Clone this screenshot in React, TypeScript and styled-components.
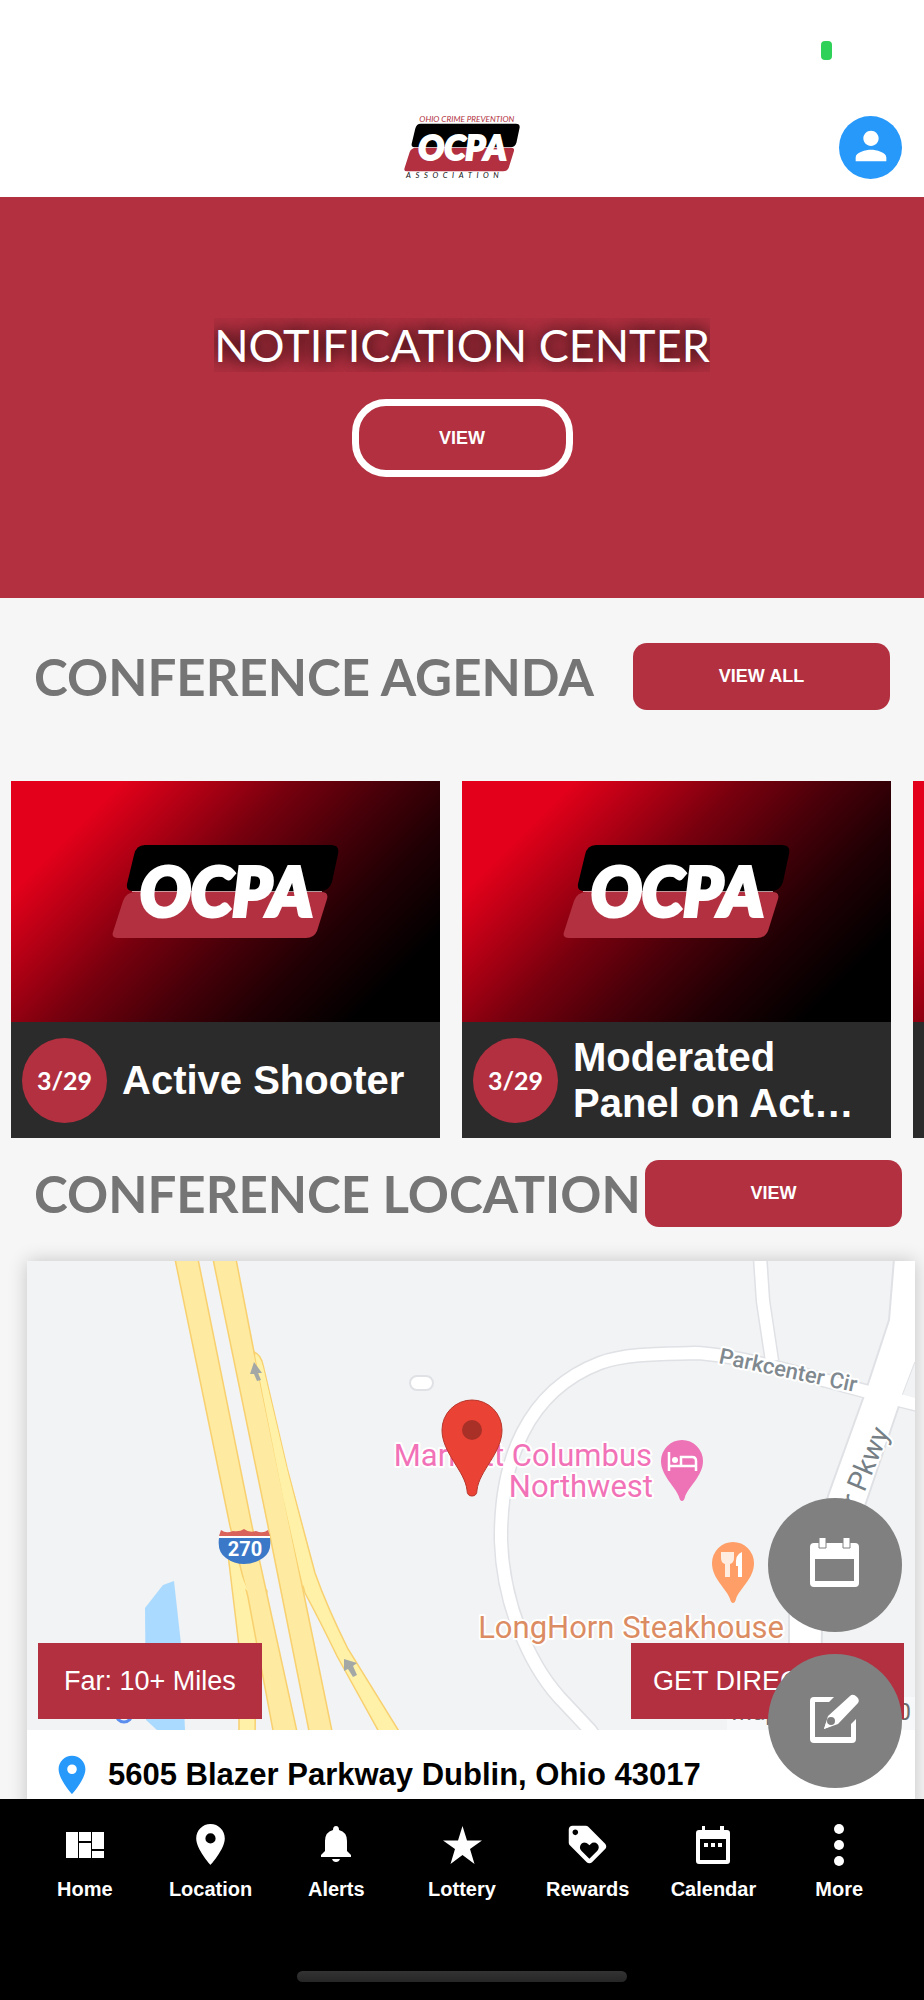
import React from "react";
import styled, { createGlobalStyle } from "styled-components";
import { MdLoyalty, MdPerson, MdPlace } from "react-icons/md";

const RED = "#b23040";
const BLUE = "#2699fb";
const SANS = `"Liberation Sans", Arial, sans-serif`;
const DISPLAY = `Lato, "Liberation Sans", sans-serif`;

const GlobalStyle = createGlobalStyle`
  *, *::before, *::after { box-sizing: border-box; }
  body { margin: 0; background: #f6f6f6; font-family: ${SANS}; }
  button { font-family: inherit; border: 0; padding: 0; cursor: pointer; }
  h1, h2, h3, p, ul { margin: 0; padding: 0; }
  svg { display: block; }
`;

const Shell = styled.div`
  height: 100vh;
  display: flex;
  flex-direction: column;
  background: #f6f6f6;
`;

const StatusBar = styled.div`
  flex: none;
  height: 98px;
  padding: 41px 92px 0 0;
  display: flex;
  justify-content: flex-end;
  background: #fff;
`;

const Battery = styled.span`
  width: 11px;
  height: 19px;
  border-radius: 4px;
  background: #30d158;
`;

const TopBar = styled.header`
  flex: none;
  height: 99px;
  padding: 0 22px;
  display: grid;
  grid-template-columns: 1fr auto 1fr;
  align-items: center;
  background: #fff;
`;

const Avatar = styled.button`
  grid-column: 3;
  justify-self: end;
  width: 63px;
  height: 63px;
  border-radius: 50%;
  display: grid;
  place-items: center;
  padding-bottom: 4px;
  background: ${BLUE};
  color: #fff;
`;

const BrandLink = styled.a`
  grid-column: 2;
`;

const Stage = styled.div`
  position: relative;
  flex: 1;
  min-height: 0;
  display: flex;
`;

const Content = styled.main`
  flex: 1;
  min-width: 0;
  overflow: hidden auto;
  scrollbar-width: none;
`;

const Hero = styled.section`
  height: 401px;
  display: flex;
  flex-direction: column;
  align-items: center;
  justify-content: center;
  gap: 27px;
  background: ${RED};
`;

const HeroTitle = styled.h1`
  overflow: hidden;
  font: 400 45px/54px ${DISPLAY};
  color: #fff;
  text-shadow: 0 0 20px rgba(0, 0, 0, 0.8), 0 0 14px rgba(0, 0, 0, 0.5);
`;

const OutlineButton = styled.button`
  width: 221px;
  height: 78px;
  border: 7px solid #fff;
  border-radius: 34px;
  background: transparent;
  color: #fff;
  font-size: 18px;
  font-weight: 700;
`;

const SectionBar = styled.div<{ $tight?: boolean }>`
  display: flex;
  align-items: center;
  justify-content: space-between;
  padding: ${(p) => (p.$tight ? "22px 22px 34px 34px" : "45px 34px 71px")};
`;

const SectionTitle = styled.h2`
  font: 700 51px/62px ${DISPLAY};
  color: #757575;
  white-space: nowrap;
`;

const SolidButton = styled.button`
  flex: none;
  width: 257px;
  height: 67px;
  border-radius: 14px;
  background: ${RED};
  color: #fff;
  font-size: 18px;
  font-weight: 700;
`;

const CardRail = styled.ul`
  display: flex;
  gap: 22px;
  padding: 0 11px;
  list-style: none;
  overflow-x: auto;
  scrollbar-width: none;
`;

const Card = styled.li`
  flex: none;
  width: 429px;
  background: #2b2b2b;
`;

const CardArt = styled.div`
  height: 241px;
  padding-bottom: 20px;
  display: grid;
  place-items: center;
  background: linear-gradient(135deg, #e2001a 17%, #b00014 29%, #78000e 42%, #4a0009 56%, #220004 70%, #000 87%);
`;

const CardFooter = styled.div`
  height: 116px;
  display: flex;
  align-items: center;
  gap: 15px;
  padding: 0 20px 0 11px;
`;

const DateBadge = styled.span`
  flex: none;
  width: 85px;
  height: 85px;
  border-radius: 50%;
  display: grid;
  place-items: center;
  background: ${RED};
  color: #fff;
  font: 700 25px/32px ${DISPLAY};
`;

const CardTitle = styled.h3`
  color: #fff;
  font-size: 40px;
  line-height: 46px;
`;

const PlaceCard = styled.article`
  margin: 0 9px 22px 27px;
  background: #fff;
  box-shadow: 0 0 18px rgba(0, 0, 0, 0.2);
`;

const MapFrame = styled.div`
  position: relative;
  height: 469px;
  overflow: hidden;
`;

const MapOverlay = styled.div`
  position: absolute;
  inset: auto 11px 11px;
  display: flex;
  justify-content: space-between;
`;

const Distance = styled.span`
  height: 76px;
  padding: 0 26px;
  display: flex;
  align-items: center;
  background: ${RED};
  color: #fff;
  font-size: 27px;
`;

const Directions = styled.button`
  height: 76px;
  padding: 0 22px;
  background: ${RED};
  color: #fff;
  font-size: 27px;
`;

const Address = styled.p`
  height: 90px;
  padding: 0 22px;
  display: flex;
  align-items: center;
  gap: 13px;
  color: #000;
  font-size: 31px;
  font-weight: 700;
  white-space: nowrap;
`;

const FabStack = styled.div`
  position: absolute;
  right: 22px;
  bottom: 11px;
  display: flex;
  flex-direction: column;
  gap: 22px;
`;

const Fab = styled.button`
  width: 134px;
  height: 134px;
  border-radius: 50%;
  display: grid;
  place-items: center;
  padding: 0 2px 5px 0;
  background: #808080;
`;

const TabBar = styled.nav`
  flex: none;
  background: #000;
`;

const Tabs = styled.ul`
  display: flex;
  padding: 20px 22px 0;
  list-style: none;
`;

const Tab = styled.li`
  flex: 1;
`;

const TabLink = styled.a`
  display: flex;
  flex-direction: column;
  align-items: center;
  gap: 7px;
  color: #fff;
  font-size: 20px;
  line-height: 24px;
  font-weight: 700;
  text-decoration: none;
`;

const TabIcon = styled.span`
  height: 51px;
  display: grid;
  place-items: center;
`;

const HomeIndicator = styled.div`
  width: 330px;
  max-width: 60%;
  height: 11px;
  margin: 70px auto 18px;
  border-radius: 6px;
  background: linear-gradient(#333, #262626);
`;

function LogoMark() {
  return (
    <>
      <path d="M33 0H219Q228 0 226 9L220 37Q217 46 208 46H20Q14 46 15 39L22 10Q24 0 33 0Z" fill="#000" />
      <path d="M24 47H209Q217 47 215 54L205 86Q202 93 194 93H6Q-1 93 1 87L11 56Q14 47 24 47Z" fill={RED} />
      <path d="M20 46.5H210" stroke="#fff" strokeOpacity="0.6" />
      <text
        x="28"
        y="71"
        fill="#fff"
        stroke="#fff"
        strokeWidth="4"
        fontFamily="Lato"
        fontWeight="900"
        fontStyle="italic"
        fontSize="67"
      >
        OCPA
      </text>
    </>
  );
}

function CardLogo() {
  return (
    <svg width="227" height="94" viewBox="0 0 227 94" role="img" aria-label="OCPA">
      <LogoMark />
    </svg>
  );
}

const TrackedWord = styled.text`
  font: italic 400 15px Lato, sans-serif;
  letter-spacing: 9px;
`;

function BrandLogo() {
  return (
    <svg width="116" height="67" viewBox="0 -19 227 131" role="img" aria-label="Ohio Crime Prevention Association">
      <LogoMark />
      <text x="30" y="-3" fill={RED} fontFamily="Lato" fontStyle="italic" fontSize="16">
        OHIO CRIME PREVENTION
      </text>
      <TrackedWord x="4" y="107" fill="#111">
        ASSOCIATION
      </TrackedWord>
    </svg>
  );
}

const Label = styled.text`
  font-family: Roboto, sans-serif;
  stroke: #fff;
  stroke-width: 4px;
  stroke-linejoin: round;
  paint-order: stroke;
`;

const ring =
  "M574 485L563 469L532 436C500 400 476 340 474 280C473 200 500 130 573 102C600 92 640 93 668 92C720 94 800 122 900 146";

function MapArt() {
  return (
    <svg width="100%" height="469" viewBox="0 0 888 469" preserveAspectRatio="xMidYMid slice" role="img" aria-label="Map of the conference location">
      <rect x="-400" width="1700" height="469" fill="#f1f3f4" />
      <path d="M118 347L136 324L147 320L154 383L158 469H130L119 459Z" fill="#aadaff" />
      <circle cx="97" cy="453" r="8" fill="none" stroke="#5b8def" strokeWidth="3" />

      <g stroke="#f8d06f" strokeWidth="1.5">
        <path d="M200 285L212 385V480H228L229 385L240 330Z" fill="#fff1a8" />
        <path d="M148 -2H171L225 265L272 480H248L221 336L203 265Z" fill="#feeaa0" />
        <path d="M227 91Q234 94 236 104L260 207L288 312Q300 346 321 388L378 480H357L310 395Q292 358 278 332L240 200Z" fill="#fff1a8" />
        <path d="M186 -2H209L227 91L276 329L307 480H284L241 265Z" fill="#feeaa0" />
      </g>
      <path d="M228 94Q234 98 236 106L260 208L287 315L276 325L256 236Z" fill="#fff1a8" />
      <path d="M204 290L221 330L206 318Z" fill="#fff1a8" />
      <g fill="#a3a8a6">
        <path d="M227 101L235 112H231L234 119L230 120L227 113L223 113Z" />
        <path d="M317 398L330 402L326 405L330 414L326 416L321 408L317 410Z" />
      </g>

      <rect x="383" y="115" width="23" height="14" rx="7" fill="#fff" stroke="#dfe1e5" strokeWidth="2" />

      <g fill="none" strokeLinejoin="round">
        <path d={ring} stroke="#dfe1e5" strokeWidth="15" />
        <path d="M733 -5L736 40L745 100" stroke="#dfe1e5" strokeWidth="15" />
      </g>
      <path d="M867 -2L862 59L838 132L802 232L762 354V469H793L795 368L841 236L875 136L888 102H1300V-2Z" fill="#fff" stroke="#dfe1e5" strokeWidth="2" />
      <path d="M888 102L875 136L1300 230V102Z" fill="#f1f3f4" />
      <g fill="none" stroke="#fff" strokeWidth="12" strokeLinejoin="round">
        <path d={ring} />
        <path d="M733 -5L736 40L745 100" />
      </g>

      <path d="M194 269Q199 273 206 270Q213 271 217 268Q222 272 229 270Q236 273 241 269L243 275H192Z" fill="#d9625b" />
      <path d="M192 277H243Q245 291 236 297Q227 303 217 303Q207 303 199 297Q190 291 192 277Z" fill="#3c78c8" />
      <path d="M192 276H243" stroke="#fff" strokeWidth="2" />
      <text x="218" y="295" textAnchor="middle" fill="#fff" fontFamily="Roboto" fontWeight="700" fontSize="20">
        270
      </text>

      <Label x="691" y="102" fontSize="22" fontWeight="500" fill="#80898f" transform="rotate(12 691 102)">
        Parkcenter Cir
      </Label>
      <Label x="863" y="171" fontSize="28" textAnchor="end" fill="#767f85" transform="rotate(-67 863 171)">
        Blazer Pkwy
      </Label>
      <Label x="625" y="205" fontSize="31" textAnchor="end" fill="#f272b8">
        Marriott Columbus
      </Label>
      <Label x="626" y="236" fontSize="31" textAnchor="end" fill="#f272b8">
        Northwest
      </Label>
      <Label x="757" y="377" fontSize="31" textAnchor="end" fill="#dc8c62">
        LongHorn Steakhouse
      </Label>

      <path d="M655 240Q653 240 652 236C649 226 634 215 634 200A21 21 0 0 1 676 200C676 215 661 226 658 236Q657 240 655 240Z" fill="#ee72b6" />
      <path d="M642 191V210M642 205H669M669 210V200Q669 196 665 196H654V204" fill="none" stroke="#fff" strokeWidth="2.5" />
      <circle cx="648" cy="199" r="3" fill="#fff" />
      <path d="M706 342Q704 342 703 338C700 328 685 318 685 302A21 21 0 0 1 727 302C727 318 712 328 709 338Q708 342 706 342Z" fill="#ff9e67" />
      <path d="M694 291H707V297Q707 302 703 303V316H698V303Q694 302 694 297Z" fill="#fff" fillOpacity="0.8" />
      <path d="M715 291V316H711V305H709Q708 293 715 291Z" fill="#fff" />

      <rect x="700" y="436" width="188" height="33" fill="#f8f9fa" fillOpacity="0.8" />
      <text x="884" y="459" textAnchor="end" fill="#6b6b6b" fontFamily="Roboto" fontSize="24">
        Map data ©2020
      </text>

      <path d="M445 235Q440 235 440 229C438 210 415 192 415 169A30 30 0 0 1 475 169C475 192 452 210 450 229Q450 235 445 235Z" fill="#ea4335" stroke="#b8352a" strokeWidth="1" />
      <circle cx="445" cy="169" r="10" fill="#a93027" />
    </svg>
  );
}

function CalendarFabIcon() {
  return (
    <svg width="49" height="49" viewBox="0 0 49 49" fill="#fff" aria-hidden="true">
      <path fillRule="evenodd" d="M4 5H45Q49 5 49 9V45Q49 49 45 49H4Q0 49 0 45V9Q0 5 4 5ZM5 21V43H44V21Z" />
      <path d="M9 -1H16V10H9ZM33 -1H40V10H33Z" stroke="#808080" />
    </svg>
  );
}

function ComposeIcon() {
  return (
    <svg width="49" height="49" viewBox="0 0 49 49" fill="#fff" aria-hidden="true">
      <path d="M24 3L19 8H5V43H41V30L46 25V45Q46 49 42 49H4Q0 49 0 45V7Q0 3 4 3Z" />
      <path d="M14 35L18 22L40 2Q43 -1 47 3Q50 6 48 9L28 30Z" />
      <circle cx="21" cy="27" r="4" fill="#808080" />
      <path d="M14 35L16 29L21 32Z" />
    </svg>
  );
}

function DashboardIcon() {
  return (
    <svg width="38" height="26" viewBox="0 0 38 26" fill="currentColor" aria-hidden="true">
      <path d="M0 0H12V26H0ZM13 0H25V9H13ZM13 11H25V26H13ZM26 0H38V17H26ZM26 19H38V26H26Z" />
    </svg>
  );
}

function BellIcon() {
  return (
    <svg width="30" height="37" viewBox="0 0 30 37" fill="currentColor" aria-hidden="true">
      <path d="M15 0Q18 0 18 4Q26 6 26 15V25L30 29V31H0V29L4 25V15Q4 6 12 4Q12 0 15 0ZM11 33H19Q18 36 15 36Q12 36 11 33Z" />
    </svg>
  );
}

function StarIcon() {
  return (
    <svg width="39" height="38" viewBox="0 0 39 38" fill="currentColor" aria-hidden="true">
      <path d="M19.500 0L24 14.500H39L27 23L31.500 38L19.500 29L7.500 38L12 23L0 14.500H15Z" />
    </svg>
  );
}

function DateRangeIcon() {
  return (
    <svg width="34" height="38" viewBox="0 0 34 38" fill="currentColor" aria-hidden="true">
      <path fillRule="evenodd" d="M6 0H9V4H24V0H28V4H31Q34 4 34 7V35Q34 38 31 38H3Q0 38 0 35V7Q0 4 3 4H6ZM4 13V34H30V13Z" />
      <path d="M8 17H12V21H8ZM15 17H19V21H15ZM22 17H26V21H22Z" />
    </svg>
  );
}

function DotsIcon() {
  return (
    <svg width="10" height="42" viewBox="0 0 10 42" fill="currentColor" aria-hidden="true">
      <circle cx="5" cy="5" r="5" />
      <circle cx="5" cy="21" r="5" />
      <circle cx="5" cy="37" r="5" />
    </svg>
  );
}

const sessions = [
  { date: "3/29", title: "Active Shooter" },
  { date: "3/29", title: "Moderated Panel on Act…" },
  { date: "", title: "" },
];

const tabs = [
  { label: "Home", icon: <DashboardIcon /> },
  { label: "Location", icon: <MdPlace size={49} /> },
  { label: "Alerts", icon: <BellIcon /> },
  { label: "Lottery", icon: <StarIcon /> },
  { label: "Rewards", icon: <MdLoyalty size={45} /> },
  { label: "Calendar", icon: <DateRangeIcon /> },
  { label: "More", icon: <DotsIcon /> },
];

export default function App() {
  return (
    <Shell>
      <GlobalStyle />
      <StatusBar>
        <Battery />
      </StatusBar>
      <TopBar>
        <BrandLink href="#home">
          <BrandLogo />
        </BrandLink>
        <Avatar aria-label="Profile">
          <MdPerson size={46} />
        </Avatar>
      </TopBar>
      <Stage>
        <Content>
          <Hero>
            <HeroTitle>NOTIFICATION CENTER</HeroTitle>
            <OutlineButton>VIEW</OutlineButton>
          </Hero>
          <section>
            <SectionBar>
              <SectionTitle>CONFERENCE AGENDA</SectionTitle>
              <SolidButton>VIEW ALL</SolidButton>
            </SectionBar>
            <CardRail>
              {sessions.map((s, i) => (
                <Card key={i}>
                  <CardArt>{s.title && <CardLogo />}</CardArt>
                  <CardFooter>
                    {s.title && (
                      <>
                        <DateBadge>{s.date}</DateBadge>
                        <CardTitle>{s.title}</CardTitle>
                      </>
                    )}
                  </CardFooter>
                </Card>
              ))}
            </CardRail>
          </section>
          <section>
            <SectionBar $tight>
              <SectionTitle>CONFERENCE LOCATION</SectionTitle>
              <SolidButton>VIEW</SolidButton>
            </SectionBar>
            <PlaceCard>
              <MapFrame>
                <MapArt />
                <MapOverlay>
                  <Distance>Far: 10+ Miles</Distance>
                  <Directions>GET DIRECTIONS</Directions>
                </MapOverlay>
              </MapFrame>
              <Address>
                <MdPlace size={46} color={BLUE} />
                5605 Blazer Parkway Dublin, Ohio 43017
              </Address>
            </PlaceCard>
          </section>
        </Content>
        <FabStack>
          <Fab aria-label="Open calendar">
            <CalendarFabIcon />
          </Fab>
          <Fab aria-label="Compose">
            <ComposeIcon />
          </Fab>
        </FabStack>
      </Stage>
      <TabBar>
        <Tabs>
          {tabs.map((t) => (
            <Tab key={t.label}>
              <TabLink href={`#${t.label.toLowerCase()}`}>
                <TabIcon>{t.icon}</TabIcon>
                {t.label}
              </TabLink>
            </Tab>
          ))}
        </Tabs>
        <HomeIndicator />
      </TabBar>
    </Shell>
  );
}
